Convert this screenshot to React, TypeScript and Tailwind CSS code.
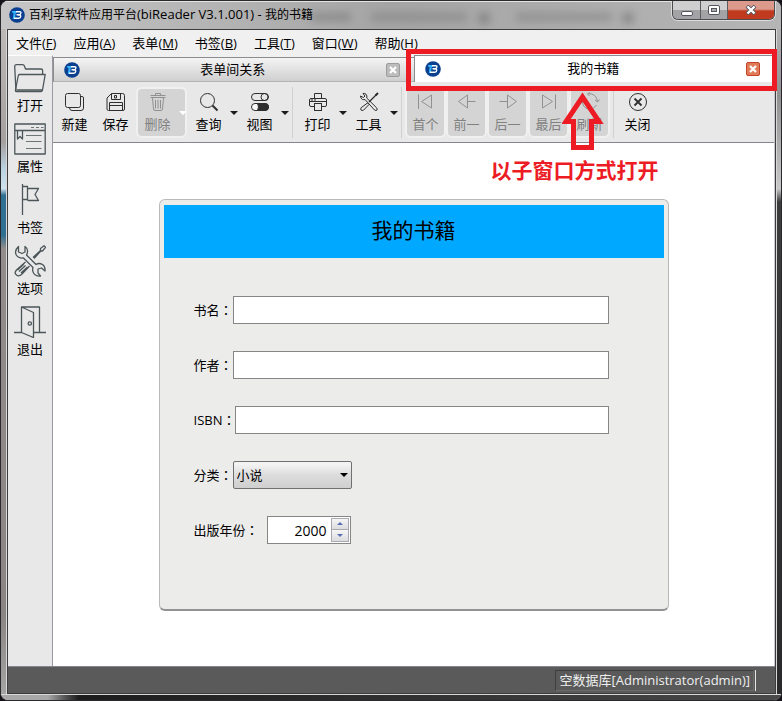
import React from "react";

function Logo() {
  return (
    <svg viewBox="0 0 16 16" className="size-4 shrink-0" aria-hidden="true">
      <circle cx="8" cy="8" r="7.8" fill="#0b3f8f" />
      <path d="M2.800 4H8L7 6.200H3.800Z" fill="#35b4ff" />
      <path d="M4.600 6.200H6.800L5.800 12H3.800Z" fill="#35b4ff" />
      <path d="M7 4.700H10.800Q12 4.700 11.900 6Q11.800 7.500 10.300 7.700H7.500" fill="none" stroke="#fff" strokeWidth="1.400" />
      <path d="M9 7.800H10.600Q11.900 8 11.700 9.400Q11.500 11.200 9.800 11.200H5" fill="none" stroke="#fff" strokeWidth="1.400" />
    </svg>
  );
}

function Svg20({ children }: { children: React.ReactNode }) {
  return (
    <svg
      viewBox="0 0 20 20"
      className="size-5 shrink-0 opacity-80"
      fill="none"
      stroke="currentColor"
      strokeWidth="1"
      aria-hidden="true"
    >
      {children}
    </svg>
  );
}

const NewIcon = () => (
  <Svg20>
    <rect x="0.500" y="1.500" width="15" height="14" rx="2" />
    <path d="M15.500 4.500H17Q18.500 4.500 18.500 6V16Q18.500 18.500 16 18.500H7Q4.500 18.500 4.500 15.500" />
  </Svg20>
);
const SaveIcon = () => (
  <Svg20>
    <path d="M5.500 1.500H16.500Q18.500 1.500 18.500 3.500V17Q18.500 18.500 17 18.500H2.500Q1 18.500 1 17V6Z" />
    <path d="M5.500 1.500V7.500H14.500V1.500M8.500 3.500H10.500V6H8.500Z" />
    <path d="M3.500 18V10.500H16.500V18M4 13.500H16" />
  </Svg20>
);
const TrashIcon = () => (
  <Svg20>
    <path d="M2.500 3.500H17.500M7.500 3V1.500H12.500V3M2.500 5.500H17.500M4.500 6L5.500 17Q5.600 18.500 7 18.500H13Q14.400 18.500 14.500 17L15.500 6" />
    <path d="M7.500 8V16.500M10 8V16.500M12.500 8V16.500" />
  </Svg20>
);
const SearchIcon = () => (
  <Svg20>
    <circle cx="8.500" cy="8.500" r="7" />
    <path d="M13.500 13.500L18.500 18.500" strokeWidth="2" />
  </Svg20>
);
const ToggleIcon = () => (
  <Svg20>
    <rect x="1.500" y="1.500" width="17" height="7" rx="3.500" />
    <circle cx="14.500" cy="5" r="3.500" />
    <rect x="1.500" y="11.500" width="17" height="7" rx="3.500" fill="#fff" />
    <path d="M7.500 11.500H15Q18.500 11.500 18.500 15T15 18.500H7.500Q9.500 15 7.500 11.500Z" fill="#000" />
  </Svg20>
);
const PrintIcon = () => (
  <Svg20>
    <path d="M6.500 6.500V1.500H13.500V6.500" />
    <path d="M6.500 14.500H3Q1.500 14.500 1.500 13V8Q1.500 6.500 3 6.500H17Q18.500 6.500 18.500 8V13Q18.500 14.500 17 14.500H13.500" />
    <path d="M2 9.500H18" />
    <path d="M3 8H9" strokeDasharray="2 1" />
    <rect x="6.500" y="11.500" width="7" height="7" />
  </Svg20>
);
const ToolsIcon = () => (
  <Svg20>
    <path d="M4 1.500L6 4L4.500 5.500L1.500 4Q1.500 6.500 3.500 7.500Q5 8 6 7.500L15.500 18Q17 19 18 18Q18.700 17 17.500 15.700L7.700 6Q8.500 3.800 7 2.200Q5.500 1 4 1.500Z" />
    <path d="M8.500 11L10 12.500L4.500 18.200Q3 19 2 18Q1.200 17 2.200 15.700Z" />
    <path d="M10 10L18 2" strokeWidth="1.200" />
    <path d="M19 1L16.500 3.500" strokeWidth="2" />
  </Svg20>
);
const FirstIcon = () => (
  <Svg20>
    <path d="M2.500 2.500V17M15.500 3V16L5.500 9.500Z" />
  </Svg20>
);
const PrevIcon = () => (
  <Svg20>
    <path d="M10.500 3V16L1.500 9.500ZM10.500 9.500H18.500" />
  </Svg20>
);
const NextIcon = () => (
  <Svg20>
    <path d="M9.500 3V16L18.500 9.500ZM9.500 9.500H1.500" />
  </Svg20>
);
const LastIcon = () => (
  <Svg20>
    <path d="M16.500 2.500V17M3.500 3V16L13.500 9.500Z" />
  </Svg20>
);
const RefreshIcon = () => (
  <Svg20>
    <path d="M8 1.500Q16.500 1.500 17.500 9.500M15 8L17.500 10L19.500 7.500M10 .5L7.500 2L9.500 4M16.500 13Q13.500 18 8.500 17Q3 16 2.500 10M.8 11.500L2.500 9L5 10.500M5 5L3.500 7" />
  </Svg20>
);
const CloseRoundIcon = () => (
  <Svg20>
    <circle cx="10" cy="10" r="8.500" />
    <path d="M6.500 6.500L13.500 13.500M13.500 6.500L6.500 13.500" strokeWidth="1.800" />
  </Svg20>
);

function Svg32({ children }: { children: React.ReactNode }) {
  return (
    <svg
      viewBox="0 0 32 32"
      className="size-8 shrink-0 text-[#4c5659]"
      fill="none"
      stroke="currentColor"
      strokeWidth="1.300"
      strokeLinejoin="round"
      aria-hidden="true"
    >
      {children}
    </svg>
  );
}

const FolderIcon = () => (
  <Svg32>
    <path d="M2 29.500L.7 4.500Q.7 2.800 2.200 2.700H8.500Q10 2.700 10.500 4.200L11.500 7H27Q28.600 7 28.600 8.500V12" />
    <path d="M5.500 12.500H31.200L28.500 28Q28.200 29.500 26.800 29.500H2Q1.300 29.500 1.500 28L4.200 14Q4.500 12.500 5.500 12.500Z" />
    <path d="M3 28H28" />
  </Svg32>
);
const PropertiesIcon = () => (
  <Svg32>
    <rect x=".8" y="1" width="30.400" height="30" />
    <path d="M1 7.500H31M3.500 7.500V16L6 13.500L8.500 16V7.500" />
    <path
      d="M17 4.500H20M22 4.500H25M27 4.500H29.500M12 12.500H27.500M12 18.500H27.500M12 25.500H27.500"
      strokeWidth="1"
      opacity=".8"
    />
  </Svg32>
);
const FlagIcon = () => (
  <Svg32>
    <path d="M8.500 0V31M8.500 2.500H13.500V15.500H8.500M13.500 4.500H24.500L21 10.500L24.500 16.500H14L13.500 15.500" />
  </Svg32>
);
const OptionsIcon = () => (
  <Svg32>
    <path d="M4.500 1.500V7L8 8.500L11 7V1.500Q14 3.500 13.500 7Q13.300 9 12.500 10L22 19.500Q25 17.500 28.500 19.500Q31.500 21.500 31 26L27.500 23L24 24V28L26.500 31Q21.500 31.500 19.500 28Q18 25.500 19 22.500L9.500 13Q4.500 13.500 2.300 10Q0 5.500 4.500 1.500Z" />
    <path d="M19 12.500L26.500 5.500V3.500L30 .8L31.500 2.300L28.500 6H26.800L20 13.500M11.500 17L3 24.500Q-.5 28 2.500 30Q5 32 8 29L15.500 21M5 26.500L11.500 20.500M7 28L13.500 22M3.500 25L10 19" />
  </Svg32>
);
const ExitIcon = () => (
  <Svg32>
    <path d="M0 26.500H7.500M20 26.500H32M7.500 1H25.500V26.500M7.500 1V26.500L19.500 31.500V6.500Z" />
    <circle cx="15.800" cy="17.500" r="1.700" />
  </Svg32>
);

const menus = [
  ["文件", "F"],
  ["应用", "A"],
  ["表单", "M"],
  ["书签", "B"],
  ["工具", "T"],
  ["窗口", "W"],
  ["帮助", "H"],
];

const sideItems: { label: string; icon: React.FC }[] = [
  { label: "打开", icon: FolderIcon },
  { label: "属性", icon: PropertiesIcon },
  { label: "书签", icon: FlagIcon },
  { label: "选项", icon: OptionsIcon },
  { label: "退出", icon: ExitIcon },
];

function ToolButton({
  label,
  icon: Icon,
  disabled = false,
  menu = false,
}: {
  label: string;
  icon: React.FC;
  disabled?: boolean;
  menu?: boolean;
}) {
  return (
    <button
      disabled={disabled}
      className={`flex h-[51px] shrink-0 rounded-md border-2 ${menu ? "w-[51px]" : "w-[41px]"} ${
        disabled ? "border-[#f0f0f0] bg-[#d4d4d4] text-[#808080]" : "border-transparent text-black"
      }`}
    >
      <span className={`flex shrink-0 flex-col items-center pt-[3px] ${menu ? "w-[39px]" : "w-[37px]"}`}>
        <Icon />
        <span className="mt-0.5 leading-5 whitespace-nowrap">{label}</span>
      </span>
      {menu && (
        <span
          className={`mt-[22px] ml-0.5 h-0 w-0 shrink-0 border-x-4 border-t-4 border-x-transparent ${
            disabled ? "border-t-white" : "border-t-[#1c1c1c]"
          }`}
        />
      )}
    </button>
  );
}

const Separator = () => <span className="mx-[3px] h-[51px] w-px shrink-0 bg-[#d0d0d0]" />;

function Tab({ label, active = false }: { label: string; active?: boolean }) {
  return (
    <div
      className={`flex h-full items-center border-t border-l border-[#8c8c90] pr-[14px] pl-2.5 ${
        active ? "bg-white" : "border-b border-b-[#b4b4b4] bg-linear-to-b from-[#f4f4f4] via-[#e2e2e2] to-[#cfcfcf]"
      }`}
    >
      <Logo />
      <span className="flex-1 text-center">{label}</span>
      <button
        aria-label={`关闭 ${label}`}
        className={`flex size-[14px] items-center justify-center rounded-xs border text-white ${
          active ? "border-[#c8402a] bg-[#e07b58]" : "border-[#9c9c9c] bg-[#bcbcbc]"
        }`}
      >
        <svg viewBox="0 0 8 8" className="size-2" stroke="currentColor" strokeWidth="2.200" aria-hidden="true">
          <path d="M1 1L7 7M7 1L1 7" />
        </svg>
      </button>
    </div>
  );
}

function FieldLabel({ htmlFor, children }: { htmlFor: string; children: React.ReactNode }) {
  return (
    <label htmlFor={htmlFor} className="shrink-0 pt-0.5 whitespace-nowrap">
      {children}
      <span className="font-['Noto_Sans_CJK_TC',sans-serif]">：</span>
    </label>
  );
}

function TextField({ id, label }: { id: string; label: string }) {
  return (
    <div className="flex h-7 items-center">
      <FieldLabel htmlFor={id}>{label}</FieldLabel>
      <input id={id} className="h-7 min-w-0 flex-1 border border-[#868686] bg-white px-1 outline-none" />
    </div>
  );
}

export default function App() {
  return (
    <div className="h-screen bg-[#15121a] font-['Open_Sans','Noto_Sans_CJK_SC',sans-serif] text-[13px] text-black">
      <div className="flex h-full flex-col overflow-hidden rounded-lg border border-[#2a2a2e] bg-[#b8b8b8]">
        <header className="relative flex h-7 shrink-0 items-center bg-linear-to-r from-[#c6c6c6] via-[#a5a5a5] to-[#b5b5b5] pl-2 shadow-[inset_0_1px_0_#e4e4e4]">
          <div className="absolute top-3 left-[310px] h-2 w-10 bg-[#6b6b6b] opacity-50 blur-xs" />
          <div className="absolute top-3 left-[370px] h-2 w-24 bg-[#777777] opacity-50 blur-xs" />
          <div className="absolute top-3 left-[478px] h-2.5 w-2.5 bg-[#666666] opacity-60 blur-xs" />
          <div className="absolute top-3 left-[515px] h-2 w-24 bg-[#777777] opacity-50 blur-xs" />
          <div className="absolute top-3 left-[622px] h-2.5 w-2.5 bg-[#666666] opacity-60 blur-xs" />
          <Logo />
          <h1 className="relative ml-1 flex-1 text-[12px] whitespace-nowrap">
            百利孚软件应用平台<span className="text-[13px]">(biReader V3.1.001) - </span>我的书籍
          </h1>
          <div className="mr-1.5 flex h-[19px] self-start overflow-hidden rounded-b-md border border-t-0 border-[#4b4b50] shadow-[0_0_0_1px_#dcdcdc]">
            <button
              aria-label="最小化"
              className="flex w-7 items-center justify-center border-r border-[#5b5b60] bg-linear-to-b from-[#cfcfd0] from-50% to-[#a3a3a6] to-50%"
            >
              <span className="mt-1.5 h-[5px] w-3 rounded-xs border border-[#54545f] bg-white" />
            </button>
            <button
              aria-label="最大化"
              className="flex w-[27px] items-center justify-center border-r border-[#5b5b60] bg-linear-to-b from-[#cfcfd0] from-50% to-[#a3a3a6] to-50%"
            >
              <span className="flex h-[10px] w-3 items-center justify-center rounded-xs border border-[#54545f] bg-white">
                <span className="h-1 w-1.5 border border-[#54545f] bg-[#b0b0b0]" />
              </span>
            </button>
            <button
              aria-label="关闭窗口"
              className="flex w-[46px] items-center justify-center bg-linear-to-b from-[#dc9a8c] from-45% to-[#c03a20] to-55%"
            >
              <svg viewBox="0 0 12 10" className="h-2.5 w-3" aria-hidden="true">
                <path d="M2 1L10 9M10 1L2 9" stroke="#54545f" strokeWidth="4" />
                <path d="M2.500 1.500L9.500 8.500M9.500 1.500L2.500 8.500" stroke="#fff" strokeWidth="2.400" />
              </svg>
            </button>
          </div>
        </header>

        <div className="flex min-h-0 flex-1">
          <div className="w-[6px] shrink-0 border-r border-[#d8d8d8] bg-[linear-gradient(#bdb9b7_0%,#a5a09e_17%,#b9d3e2_21%,#cfe2ee_24%,#2f6f92_25%,#2f6f92_31%,#928d8a_33%,#8a8582_88%,#a4a4a4_100%)]" />
          <div className="flex min-w-0 flex-1 flex-col border border-[#3c3c3e]">
            <nav className="flex h-[25px] shrink-0 items-center gap-[17px] bg-[#f0f0f0] px-2 pt-0.5">
              {menus.map(([name, key]) => (
                <button key={key} className="whitespace-nowrap">
                  {name}(<span className="underline">{key}</span>)
                </button>
              ))}
            </nav>

            <div className="flex min-h-0 flex-1">
              <aside className="flex w-[45px] shrink-0 flex-col border-t border-r border-t-white border-r-[#9a9aa2] bg-[#e8e8e8] pt-1.5">
                {sideItems.map(({ label, icon: Icon }) => (
                  <button key={label} className="flex h-[61px] flex-col items-center">
                    <Icon />
                    <span className="leading-[22px]">{label}</span>
                  </button>
                ))}
              </aside>

              <section className="flex min-w-0 flex-1 flex-col border-r border-[#c8c8cc]">
                <div className="grid h-[27px] shrink-0 grid-cols-2 bg-[#f0f0f0]">
                  <div className="pt-0.5">
                    <Tab label="表单间关系" />
                  </div>
                  <div className="relative z-10">
                    <Tab label="我的书籍" active />
                    <div className="pointer-events-none absolute -top-1.5 -right-[3px] -bottom-[9px] -left-2 border-[5px] border-[#ed1c24]" />
                    <svg
                      viewBox="0 0 42 58"
                      className="pointer-events-none absolute top-[37px] left-[148px] h-[58px] w-[42px]"
                      aria-hidden="true"
                    >
                      <path
                        d="M20.500 5L4 29.500H11.500V55.500H29.500V29.500H37Z"
                        fill="none"
                        stroke="#ed1c24"
                        strokeWidth="5"
                      />
                    </svg>
                    <p className="pointer-events-none absolute top-[101px] left-[77px] text-[21px] leading-7 font-bold whitespace-nowrap text-[#ed1c24]">
                      以子窗口方式打开
                    </p>
                  </div>
                </div>

                <div className="flex h-[61px] shrink-0 items-center border-b border-[#85858d] bg-[#e8e8e8] pl-px">
                  <ToolButton label="新建" icon={NewIcon} />
                  <ToolButton label="保存" icon={SaveIcon} />
                  <ToolButton label="删除" icon={TrashIcon} disabled menu />
                  <ToolButton label="查询" icon={SearchIcon} menu />
                  <ToolButton label="视图" icon={ToggleIcon} menu />
                  <Separator />
                  <ToolButton label="打印" icon={PrintIcon} menu />
                  <ToolButton label="工具" icon={ToolsIcon} menu />
                  <Separator />
                  <ToolButton label="首个" icon={FirstIcon} disabled />
                  <ToolButton label="前一" icon={PrevIcon} disabled />
                  <ToolButton label="后一" icon={NextIcon} disabled />
                  <ToolButton label="最后" icon={LastIcon} disabled />
                  <ToolButton label="刷新" icon={RefreshIcon} disabled />
                  <Separator />
                  <ToolButton label="关闭" icon={CloseRoundIcon} />
                </div>

                <main className="flex min-h-0 flex-1 items-center justify-center bg-white">
                  <form className="w-[510px] rounded-md border border-b-2 border-[#b9b9b9] border-b-[#929292] bg-[#ececeb] px-1 pt-[5px] pb-[3px]">
                    <h2 className="flex h-[53px] items-center justify-center bg-[#00a8ff] text-[21px]">我的书籍</h2>
                    <div className="flex flex-col gap-[27px] pt-[38px] pr-[55px] pb-[62px] pl-[30px]">
                      <TextField id="title" label="书名" />
                      <TextField id="author" label="作者" />
                      <TextField id="isbn" label="ISBN" />
                      <div className="flex h-7 items-center">
                        <FieldLabel htmlFor="category">分类</FieldLabel>
                        <div className="relative">
                          <select
                            id="category"
                            className="h-7 w-[119px] appearance-none rounded-xs border border-[#707070] bg-linear-to-b from-[#f3f3f3] from-10% via-[#dcdcdc] to-[#cfcfcf] pt-0.5 pl-[3px] outline-none"
                          >
                            <option>小说</option>
                          </select>
                          <span className="pointer-events-none absolute top-3 right-1 h-0 w-0 border-x-4 border-t-4 border-x-transparent border-t-black" />
                        </div>
                      </div>
                      <div className="flex h-7 items-center gap-2">
                        <FieldLabel htmlFor="year">出版年份</FieldLabel>
                        <div className="flex h-7 w-[84px] border border-[#868686] bg-white p-px">
                          <input
                            id="year"
                            inputMode="numeric"
                            defaultValue="2000"
                            className="min-w-0 flex-1 pt-0.5 pr-1 text-right text-[14px] outline-none"
                          />
                          <div className="flex w-[18px] flex-col border border-[#a9a9b0]">
                            <button
                              type="button"
                              aria-label="增加"
                              className="flex flex-1 items-center justify-center border-b border-[#a9a9b0] bg-linear-to-b from-[#f6f6f6] to-[#dcdce0]"
                            >
                              <span className="h-0 w-0 border-x-3 border-b-3 border-x-transparent border-b-[#5a6cb4]" />
                            </button>
                            <button
                              type="button"
                              aria-label="减少"
                              className="flex flex-1 items-center justify-center bg-linear-to-b from-[#f6f6f6] to-[#dcdce0]"
                            >
                              <span className="h-0 w-0 border-x-3 border-t-3 border-x-transparent border-t-[#5a6cb4]" />
                            </button>
                          </div>
                        </div>
                      </div>
                    </div>
                  </form>
                </main>
              </section>
            </div>

            <footer className="flex h-[27px] shrink-0 items-center justify-end border-t border-[#85858d] bg-[#5a5a5a] pr-[19px] text-[#f0f0f0]">
              <span className="flex h-[21px] items-center border border-t-[#3e3e3e] border-r-[#6c6c6c] border-b-[#6c6c6c] border-l-[#3e3e3e] px-[3px] pt-0.5 whitespace-nowrap">
                空数据库[Administrator(admin)]
              </span>
              <span className="ml-px h-[21px] w-px bg-[#e4e4e4]" />
            </footer>
          </div>
          <div className="w-[5px] shrink-0 border-l border-[#d8d8d8] bg-[linear-gradient(#b0b0b0_0%,#909090_10%,#c8c8c8_24%,#3c3c3c_26%,#2a2a2a_100%)]" />
        </div>
        <div className="h-[6px] shrink-0 border-t border-[#d8d8d8] bg-linear-to-r from-[#a8a8a8] from-6% via-[#1c1c1c] via-10% to-[#4a4a4a]" />
      </div>
    </div>
  );
}
